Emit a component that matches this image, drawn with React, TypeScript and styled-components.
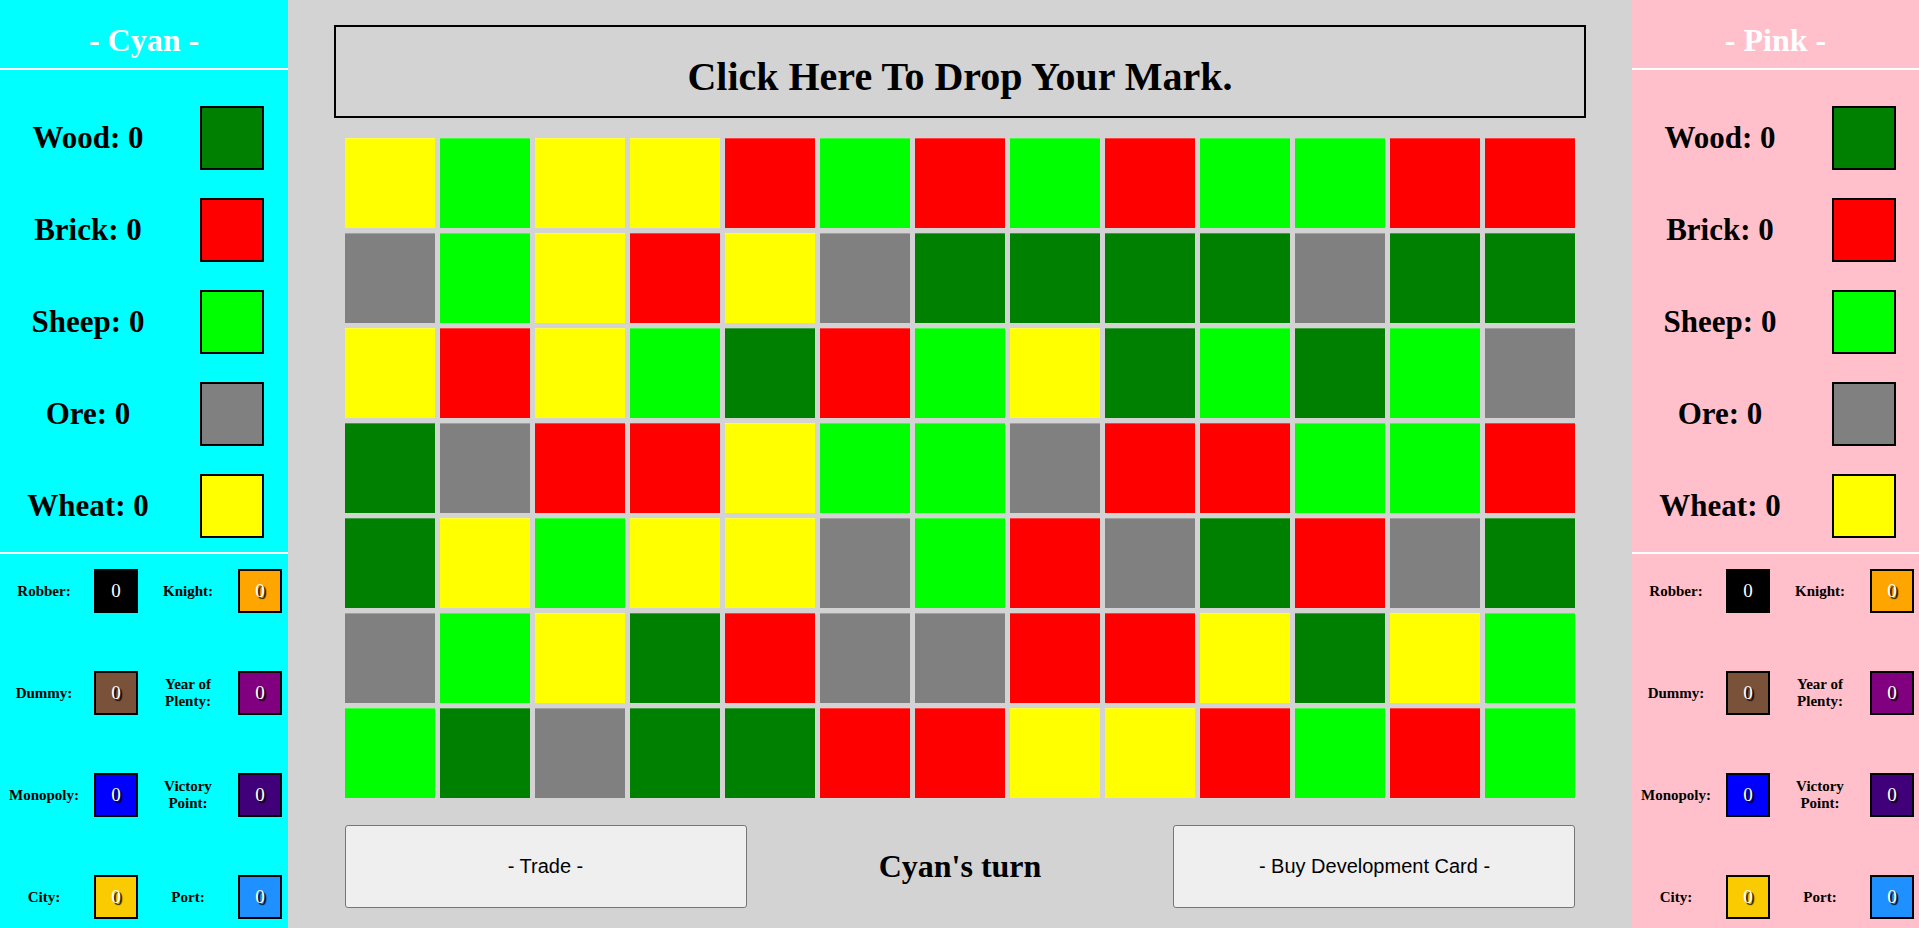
import styled, { createGlobalStyle } from 'styled-components';

const GlobalStyle = createGlobalStyle`
    html, body {
        margin: 0;
        padding: 0;
        background: #D3D3D3;
        font-family: 'Liberation Serif', 'Times New Roman', serif;
    }
`;

const TILE: Record<string, string> = {
    Y: '#FFFF00',
    L: '#00FF00',
    R: '#FF0000',
    G: '#008000',
    O: '#808080',
};

const BOARD = [
    'YLYYRLRLRLLRR',
    'OLYRYOGGGGOGG',
    'YRYLGRLYGLGLO',
    'GORRYLLORRLLR',
    'GYLYYOLROGROG',
    'OLYGROORRYGYL',
    'LGOGGRRYYRLRL',
];

const RESOURCES = [
    { name: 'Wood', color: '#008000' },
    { name: 'Brick', color: '#FF0000' },
    { name: 'Sheep', color: '#00FF00' },
    { name: 'Ore', color: '#808080' },
    { name: 'Wheat', color: '#FFFF00' },
];

const CARDS = [
    [{ name: 'Robber:', color: '#000000' }, { name: 'Knight:', color: '#FFA500' }],
    [{ name: 'Dummy:', color: '#7A5139' }, { name: 'Year of Plenty:', color: '#800080' }],
    [{ name: 'Monopoly:', color: '#0000FF' }, { name: 'Victory Point:', color: '#40007A' }],
    [{ name: 'City:', color: '#FACB00' }, { name: 'Port:', color: '#1E90FF' }],
];

function PlayerPanel({ name, bg }: { name: string; bg: string }) {
    return (
        <Panel $bg={bg}>
            <PlayerName>- {name} -</PlayerName>
            <Divider />
            <Resources>
                {RESOURCES.map(r => (
                    <ResourceRow key={r.name}>
                        <ResourceLabel>{r.name}: 0</ResourceLabel>
                        <ResourceSwatch $color={r.color} />
                    </ResourceRow>
                ))}
            </Resources>
            <Divider />
            <Cards>
                {CARDS.map((row, i) => (
                    <CardRow key={i}>
                        {row.map(c => (
                            <CardCell key={c.name}>
                                <CardLabel>{c.name}</CardLabel>
                                <CardCount $color={c.color}>0</CardCount>
                            </CardCell>
                        ))}
                    </CardRow>
                ))}
            </Cards>
        </Panel>
    );
}

export default function App() {
    return (
        <>
            <GlobalStyle />
            <Page>
                <PlayerPanel name='Cyan' bg='#00FFFF' />
                <Center>
                    <DropBox>Click Here To Drop Your Mark.</DropBox>
                    <Board>
                        {BOARD.map((row, r) =>
                            row.split('').map((t, c) => <Tile key={`${r}-${c}`} $color={TILE[t]} />)
                        )}
                    </Board>
                    <Controls>
                        <ActionButton>- Trade -</ActionButton>
                        <Turn>Cyan's turn</Turn>
                        <ActionButton>- Buy Development Card -</ActionButton>
                    </Controls>
                </Center>
                <PlayerPanel name='Pink' bg='#FFC0CB' />
            </Page>
        </>
    );
}

const Page = styled.div`
    display: flex;
    height: 928px;
    overflow: hidden;
`;

const Panel = styled.div<{ $bg: string }>`
    width: 288px;
    flex-shrink: 0;
    background: ${p => p.$bg};
    display: flex;
    flex-direction: column;
    &:last-child {
        width: 287px;
    }
`;

const PlayerName = styled.div`
    height: 68px;
    display: flex;
    align-items: center;
    justify-content: center;
    color: #fff;
    font-size: 32px;
    font-weight: bold;
    padding-top: 12px;
    box-sizing: border-box;
`;

const Divider = styled.div`
    height: 2px;
    background: #fff;
`;

const Resources = styled.div`
    padding: 22px 0 0;
    height: 482px;
    box-sizing: border-box;
`;

const ResourceRow = styled.div`
    height: 92px;
    display: flex;
    align-items: center;
`;

const ResourceLabel = styled.div`
    width: 176px;
    text-align: center;
    font-size: 31px;
    font-weight: bold;
    color: #000;
`;

const ResourceSwatch = styled.div<{ $color: string }>`
    width: 60px;
    height: 60px;
    margin-left: 24px;
    background: ${p => p.$color};
    border: 2px solid #000;
`;

const Cards = styled.div`
    display: flex;
    flex-direction: column;
    gap: 58px;
    padding-top: 15px;
`;

const CardRow = styled.div`
    display: grid;
    grid-template-columns: 144px 144px;
`;

const CardCell = styled.div`
    display: flex;
    align-items: center;
`;

const CardLabel = styled.div`
    width: 88px;
    text-align: center;
    font-size: 15px;
    font-weight: bold;
    line-height: 17px;
    color: #000;
`;

const CardCount = styled.div<{ $color: string }>`
    width: 40px;
    height: 40px;
    margin-left: 6px;
    border: 2px solid #000;
    background: ${p => p.$color};
    display: flex;
    align-items: center;
    justify-content: center;
    color: #fff;
    font-size: 19px;
    text-shadow: 2px 2px 1px #000;
`;

const Center = styled.div`
    flex: 1;
    display: flex;
    flex-direction: column;
    align-items: center;
    padding-top: 25px;
`;

const DropBox = styled.div`
    width: 1252px;
    height: 93px;
    box-sizing: border-box;
    border: 2px solid #000;
    padding-top: 9px;
    display: flex;
    align-items: center;
    justify-content: center;
    font-size: 40px;
    font-weight: bold;
    color: #000;
    cursor: pointer;
`;

const Board = styled.div`
    margin-top: 20px;
    display: grid;
    grid-template-columns: repeat(13, 90px);
    grid-auto-rows: 90px;
    gap: 5px;
`;

const Tile = styled.div<{ $color: string }>`
    background: ${p => p.$color};
    box-shadow: inset 0 1px 0 rgba(255, 255, 255, 0.25);
`;

const Controls = styled.div`
    margin-top: 27px;
    width: 1231px;
    display: flex;
    align-items: center;
    justify-content: space-between;
`;

const ActionButton = styled.button`
    width: 402px;
    height: 83px;
    background: #EFEFEF;
    border: 1px solid #767676;
    border-radius: 3px;
    font-family: 'Liberation Sans', Arial, sans-serif;
    font-size: 20px;
    color: #000;
    cursor: pointer;
`;

const Turn = styled.div`
    font-size: 32px;
    font-weight: bold;
    color: #000;
`;
